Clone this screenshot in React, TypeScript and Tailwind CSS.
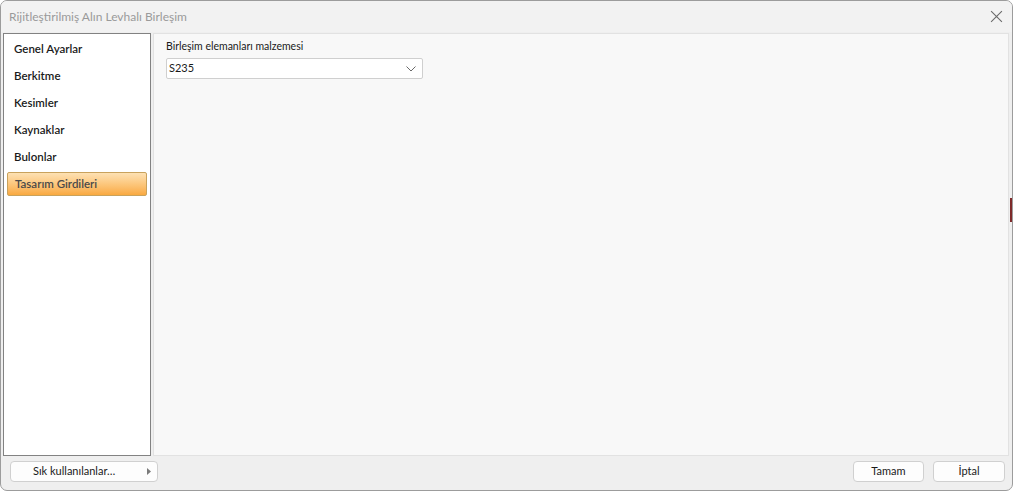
import React from 'react';

// Dialog: Rijitleştirilmiş Alın Levhalı Birleşim
const menuItems = ['Genel Ayarlar', 'Berkitme', 'Kesimler', 'Kaynaklar', 'Bulonlar', 'Tasarım Girdileri'];

export default function App() {
  const selected = 'Tasarım Girdileri';

  return (
    <div
      className="relative w-[1013px] h-[491px] flex flex-col bg-[#efefef] border border-[#9c9c9c] rounded-[7px] overflow-hidden text-[#1a1a1a]"
      style={{ fontFamily: '"Segoe UI", Lato, "Noto Sans", sans-serif' }}
    >
      {/* title bar */}
      <div className="h-[31px] shrink-0 flex items-center justify-between pl-[8px] pr-[9px] bg-[#f2f2f2]">
        <span className="text-[12px] text-[#9a9a9a]">Rijitleştirilmiş Alın Levhalı Birleşim</span>
        <svg className="w-[13px] h-[13px] text-[#6a6a6a]" viewBox="0 0 12 12" fill="none" stroke="currentColor" strokeWidth={1}>
          <path d="M1 1l10 10M11 1L1 11" />
        </svg>
      </div>

      {/* body */}
      <div className="flex-1 flex gap-[2px] pl-[2px] pr-[3px] pt-[1px]">
        {/* left menu */}
        <div className="w-[148px] h-[423px] bg-white border border-[#828282] pt-[1px] px-[3px] flex flex-col">
          {menuItems.map((item) =>
            item === selected ? (
              <div
                key={item}
                className="mt-[2px] h-[24px] flex items-center pl-[7px] rounded-[2px] border border-[#c9a25c] bg-gradient-to-b from-[#fde1b3] via-[#fcc77c] to-[#f9a93f] text-[#4a4a4a] text-[11.5px] font-semibold"
              >
                {item}
              </div>
            ) : (
              <div key={item} className="h-[27px] flex items-center pl-[7px] text-[11.5px] font-semibold text-[#1a1a1a]">
                {item}
              </div>
            )
          )}
        </div>

        {/* right content */}
        <div className="flex-1 h-[423px] bg-[#f8f8f8] border border-[#e2e2e2] pl-[12px] pt-[4px]">
          <div className="text-[10.5px] text-[#1a1a1a] leading-[16px]">Birleşim elemanları malzemesi</div>
          <div className="mt-[4px] w-[257px] h-[21px] bg-white border border-[#cfcfcf] rounded-[2px] flex items-center justify-between pl-[2px] pr-[6px]">
            <span className="text-[11px] text-[#1a1a1a]">S235</span>
            <svg className="w-[10px] h-[6px] text-[#6a6a6a]" viewBox="0 0 10 6" fill="none" stroke="currentColor" strokeWidth={1}>
              <path d="M0.5 0.5L5 5l4.5-4.5" />
            </svg>
          </div>
        </div>
      </div>

      {/* bottom bar */}
      <div className="h-[35px] shrink-0 flex items-center justify-between pl-[9px] pr-[7px] pb-[4px]">
        <button className="w-[148px] h-[21px] bg-[#fdfdfd] border border-[#d0d0d0] rounded-[4px] flex items-center justify-between pl-[22px] pr-[6px]">
          <span className="text-[11px] text-[#1a1a1a]">Sık kullanılanlar…</span>
          <svg className="w-[4px] h-[7px] text-[#7a7a7a]" viewBox="0 0 4 7" fill="currentColor">
            <path d="M0 0l4 3.5L0 7z" />
          </svg>
        </button>
        <div className="flex gap-[9px]">
          <button className="w-[71px] h-[21px] bg-[#fdfdfd] border border-[#d0d0d0] rounded-[4px] text-[11px] text-[#1a1a1a]">
            Tamam
          </button>
          <button className="w-[72px] h-[21px] bg-[#fdfdfd] border border-[#d0d0d0] rounded-[4px] text-[11px] text-[#1a1a1a]">
            İptal
          </button>
        </div>
      </div>

      {/* small red marker on the right edge */}
      <div className="absolute right-0 top-[197px] w-[2px] h-[24px] bg-[#7e2a2a]" />
    </div>
  );
}
